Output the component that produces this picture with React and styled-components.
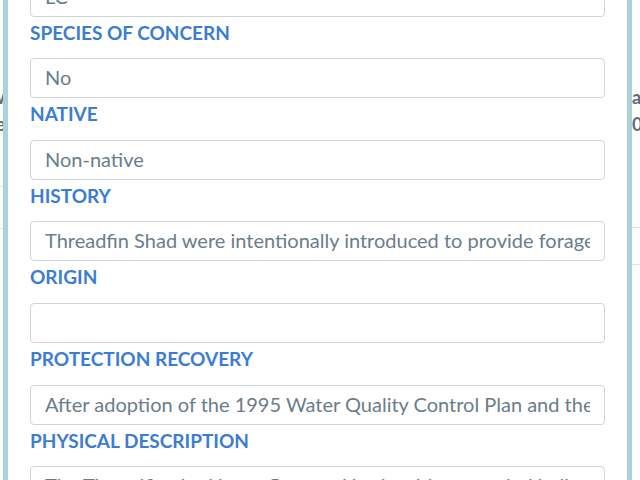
import React from "react";
import styled, { createGlobalStyle } from "styled-components";

const Global = createGlobalStyle`
  html, body { margin: 0; padding: 0; }
  body {
    width: 640px;
    height: 480px;
    overflow: hidden;
    background: #ffffff;
    font-family: "Lato", "Open Sans", sans-serif;
  }
`;

const Page = styled.div`
  width: 640px;
  height: 480px;
  display: flex;
  justify-content: space-between;
  background: #fbfcfc;
`;

const EdgeColumn = styled.div`
  width: ${(p) => p.$w}px;
  overflow: hidden;
  display: flex;
  flex-direction: column;
  align-items: ${(p) => (p.$side === "left" ? "flex-end" : "flex-start")};
  padding-top: ${(p) => p.$top}px;
`;

const EdgeText = styled.div`
  white-space: nowrap;
  font-size: 18px;
  font-weight: 700;
  line-height: 27px;
  color: #5d6f7c;
`;

const EdgeRule = styled.div`
  width: 100%;
  height: 1px;
  background: #dde3e6;
  margin-top: ${(p) => p.$gap}px;
`;

const Modal = styled.div`
  position: fixed;
  left: 3px;
  top: -70px;
  width: 619px;
  height: 620px;
  border: 5px solid #abd2d9;
  background: #ffffff;
  overflow: hidden;
  box-sizing: content-box;
`;

const Body = styled.div`
  padding: 0 22px;
  display: flex;
  flex-direction: column;
`;

const Field = styled.div`
  display: flex;
  flex-direction: column;
`;

const Label = styled.label`
  margin: 5px 0 14.6px;
  font-size: 19px;
  line-height: 22px;
  font-weight: 700;
  letter-spacing: 0;
  color: #3a7dd3;
  text-transform: uppercase;
`;

const Input = styled.input`
  box-sizing: border-box;
  width: 100%;
  height: 40px;
  margin: 0;
  padding: 0 14px 2px;
  border: 1px solid #cfd4d6;
  border-radius: 4px;
  background: #ffffff;
  font-family: "Lato", "Open Sans", sans-serif;
  font-size: 20px;
  color: #6a7d8a;
  outline: none;
`;

const fields = [
  ["IUCN Status", "LC"],
  ["Species of Concern", "No"],
  ["Native", "Non-native"],
  ["History", "Threadfin Shad were intentionally introduced to provide forage for game fish in reservoirs"],
  ["Origin", ""],
  ["Protection Recovery", "After adoption of the 1995 Water Quality Control Plan and the resulting regulations"],
  ["Physical Description", "The Threadfin shad has a flattened body with a rounded belly"],
];

export default function App() {
  return (
    <>
      <Global />
      <Page>
        <EdgeColumn $side="left" $w={5} $top={84}>
          <EdgeText>View</EdgeText>
          <EdgeText>Ne</EdgeText>
          <EdgeRule $gap={48} />
          <EdgeRule $gap={41} />
        </EdgeColumn>
        <EdgeColumn $side="right" $w={8} $top={84}>
          <EdgeText>a</EdgeText>
          <EdgeText>0</EdgeText>
          <EdgeRule $gap={89} />
          <EdgeRule $gap={36} />
        </EdgeColumn>
      </Page>
      <Modal>
        <Body>
          {fields.map(([label, value]) => (
            <Field key={label}>
              <Label>{label}</Label>
              <Input readOnly value={value} />
            </Field>
          ))}
        </Body>
      </Modal>
    </>
  );
}
